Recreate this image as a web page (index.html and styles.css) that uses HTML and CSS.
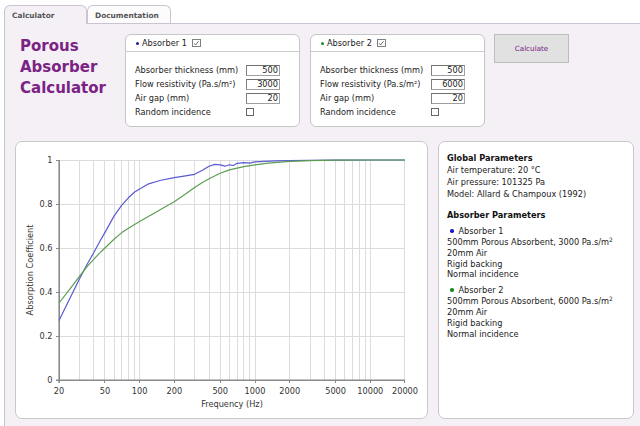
FILE: index.html
```html
<!DOCTYPE html>
<html lang="en">
<head>
<meta charset="utf-8">
<title>Porous Absorber Calculator</title>
<link rel="stylesheet" href="styles.css">
</head>
<body>
<nav class="tabs">
  <div class="tab active">Calculator</div>
  <div class="tab doc">Documentation</div>
</nav>
<main class="content">
  <section class="top">
    <h1 class="title">Porous<br>Absorber<br>Calculator</h1>
    <div class="absorber">
      <div class="abs-head"><span class="dot dot-blue"></span><span class="abs-name">Absorber 1</span><span class="cb cb-head"><svg viewBox="0 0 8 8"><path d="M1.4 4.1 L3.2 6.1 L6.8 1.5"/></svg></span></div>
      <div class="abs-body">
        <span class="lbl">Absorber thickness (mm)</span><span class="field">500</span>
        <span class="lbl">Flow resistivity (Pa.s/m²)</span><span class="field">3000</span>
        <span class="lbl">Air gap (mm)</span><span class="field">20</span>
        <span class="lbl">Random incidence</span><span class="cb"></span>
      </div>
    </div>
    <div class="absorber">
      <div class="abs-head"><span class="dot dot-green"></span><span class="abs-name">Absorber 2</span><span class="cb cb-head"><svg viewBox="0 0 8 8"><path d="M1.4 4.1 L3.2 6.1 L6.8 1.5"/></svg></span></div>
      <div class="abs-body">
        <span class="lbl">Absorber thickness (mm)</span><span class="field">500</span>
        <span class="lbl">Flow resistivity (Pa.s/m²)</span><span class="field">6000</span>
        <span class="lbl">Air gap (mm)</span><span class="field">20</span>
        <span class="lbl">Random incidence</span><span class="cb"></span>
      </div>
    </div>
    <button class="calc" type="button">Calculate</button>
  </section>
  <section class="bottom">
    <div class="panel chart">
      <svg class="plot" width="411" height="276" viewBox="16 142 411 276">
        <g transform="translate(14 141)">
          <path class="grid" d="M45 19.5H391 M45 63.5H391 M45 107.5H391 M45 151.5H391 M45 195.5H391
            M65.5 19V239 M79.5 19V239 M90.5 19V239 M100.5 19V239 M107.5 19V239 M114.5 19V239 M120.5 19V239 M125.5 19V239
            M160.5 19V239 M180.5 19V239 M195.5 19V239 M206.5 19V239 M215.5 19V239 M223.5 19V239 M229.5 19V239 M235.5 19V239 M241.5 19V239
            M275.5 19V239 M296.5 19V239 M310.5 19V239 M321.5 19V239 M330.5 19V239 M338.5 19V239 M345.5 19V239 M351.5 19V239 M356.5 19V239 M390.5 19V239"/>
          <path class="ticks" d="M42 19.5H45 M42 63.5H45 M42 107.5H45 M42 151.5H45 M42 195.5H45
            M90.5 239V242 M125.5 239V242 M160.5 239V242 M206.5 239V242 M241.5 239V242 M275.5 239V242 M321.5 239V242 M356.5 239V242 M390.5 239V242"/>
          <path class="axis" d="M45.2 19V242 M42 239.2H391"/>
          <polyline class="line-blue" points="45,179.6 56.2,156.7 65.3,138.2 73,123.5 79.7,111.8 85.6,100.8 90.9,91.6 100,75.1 107.8,64.1 114.4,56.8 120.3,51.3 125.6,48 134.7,42.8 145.9,39.5 160.3,36.6 171.5,34.8 180.6,33.3 188.4,29.3 195,25.2 201,23.4 206.2,23.8 211,25.2 215.4,23.8 219.4,24.5 223.1,22.3 229.8,21.6 235.7,22.1 241,20.8 250.1,20.3 261.3,19.9 275.7,19.7 296,19.4 321.6,19.2 356.3,19 391,19"/>
          <polyline class="line-green" points="45,162 56.2,147.7 65.3,135.6 73,125.7 79.7,118.4 85.6,112.1 90.9,107 100,98.2 107.8,91.6 114.4,87.2 125.6,80.6 138.8,72.9 152.2,65.2 160.3,60.8 171.5,53.1 180.6,46.5 188.4,41.4 195,37.7 206.2,32.2 215.4,28.9 229.8,25.6 241,23.8 254.3,22.1 275.7,20.3 296,19.7 321.6,19.2 356.3,19 391,19"/>
          <g class="ylab">
            <text x="38.5" y="22">1</text>
            <text x="38.5" y="66">0.8</text>
            <text x="38.5" y="110">0.6</text>
            <text x="38.5" y="154">0.4</text>
            <text x="38.5" y="198">0.2</text>
            <text x="38.5" y="242">0</text>
          </g>
          <g class="xlab">
            <text x="45" y="253">20</text>
            <text x="91" y="253">50</text>
            <text x="125.6" y="253">100</text>
            <text x="160.3" y="253">200</text>
            <text x="206.2" y="253">500</text>
            <text x="241" y="253">1000</text>
            <text x="275.7" y="253">2000</text>
            <text x="321.6" y="253">5000</text>
            <text x="356.3" y="253">10000</text>
            <text x="391" y="253">20000</text>
          </g>
          <text class="axtitle" x="218" y="265.5">Frequency (Hz)</text>
          <text class="axtitle" x="19" y="129" transform="rotate(-90 19 129)">Absorption Coefficient</text>
        </g>
      </svg>
    </div>
    <div class="panel params">
      <h2 class="ph">Global Parameters</h2>
      <p class="glines">Air temperature: 20 °C<br>Air pressure: 101325 Pa<br>Model: Allard &amp; Champoux (1992)</p>
      <h2 class="ph ph2">Absorber Parameters</h2>
      <div class="ab">
        <div class="ab-name"><span class="pdot pdot-blue"></span>Absorber 1</div>
        <p class="alines">500mm Porous Absorbent, 3000 Pa.s/m<sup>2</sup><br>20mm Air<br>Rigid backing<br>Normal incidence</p>
      </div>
      <div class="ab">
        <div class="ab-name"><span class="pdot pdot-green"></span>Absorber 2</div>
        <p class="alines">500mm Porous Absorbent, 6000 Pa.s/m<sup>2</sup><br>20mm Air<br>Rigid backing<br>Normal incidence</p>
      </div>
    </div>
  </section>
</main>
</body>
</html>
```
FILE: styles.css
```css
html, body {
  margin: 0;
  padding: 0;
}
body {
  width: 640px;
  height: 426px;
  overflow: hidden;
  background: #ffffff;
  font-family: "DejaVu Sans", Verdana, sans-serif;
  font-size: 8.2px;
  color: #222;
}

/* Tabs */
.tabs {
  display: flex;
  align-items: flex-end;
  height: 23px;
  padding-left: 4px;
  box-sizing: border-box;
}
.tab {
  box-sizing: border-box;
  height: 18px;
  width: 84px;
  border: 1px solid #cbc3cf;
  border-bottom: none;
  border-radius: 6px 6px 0 0;
  padding: 5px 0 0 7px;
  font-size: 7.4px;
  line-height: 9px;
  font-weight: bold;
  color: #555;
  background: #fdfcfd;
}
.tab.active {
  width: 83px;
  height: 19px;
  margin-bottom: -1px;
  background: #f4f0f6;
  position: relative;
  z-index: 1;
}

/* Content */
.content {
  display: block;
  margin-left: 4px;
  height: 402px;
  border-left: 1px solid #cbc3cf;
  border-top: 1px solid #cbc3cf;
  background: #f4f0f6;
}
.top {
  display: flex;
  align-items: flex-start;
  padding-top: 10px;
}
.title {
  margin: 2px 0 0 15px;
  width: 105px;
  font-size: 15px;
  line-height: 21px;
  font-weight: bold;
  color: #7b2385;
}
.absorber {
  box-sizing: border-box;
  width: 175px;
  height: 93px;
  border: 1px solid #c6c6c6;
  border-radius: 6px;
  background: #fff;
}
.absorber + .absorber {
  margin-left: 10px;
}
.abs-head {
  height: 16px;
  display: flex;
  align-items: center;
  padding-left: 10px;
  border-bottom: 1px solid #cccccc;
}
.dot {
  flex: none;
  width: 3px;
  height: 3px;
  border-radius: 50%;
  margin-right: 3px;
}
.dot-blue { background: #1c1c9c; }
.dot-green { background: #1c8c2c; }
.abs-name {
  line-height: 10px;
}
.cb {
  display: inline-block;
  box-sizing: border-box;
  width: 8px;
  height: 8px;
  border: 1px solid #666;
  background: #fff;
}
.cb-head {
  flex: none;
  width: 8.5px;
  height: 8.5px;
  margin-left: 5.5px;
  border-color: #808080;
}
.cb-head svg {
  display: block;
  width: 6.5px;
  height: 6.5px;
}
.cb-head path {
  fill: none;
  stroke: #333;
  stroke-width: 0.9;
}
.abs-body {
  display: grid;
  grid-template-columns: 111px 34px;
  grid-auto-rows: 14px;
  align-items: center;
  padding: 11px 0 0 9px;
}
.lbl {
  line-height: 10px;
  white-space: nowrap;
}
.field {
  box-sizing: border-box;
  height: 11px;
  border: 1px solid #a0a0a0;
  border-top-color: #707070;
  border-left-color: #808080;
  text-align: right;
  padding-right: 1px;
  line-height: 9px;
  background: #fff;
  color: #222;
}
.calc {
  margin-left: 9px;
  box-sizing: border-box;
  width: 75px;
  height: 29px;
  padding: 0;
  background: #e1e1e1;
  border: 1px solid #bdbdbd;
  color: #7b2385;
  font-family: "DejaVu Sans", Verdana, sans-serif;
  font-size: 7.2px;
}

/* Bottom panels */
.bottom {
  display: flex;
  gap: 10px;
  margin-top: 14px;
  padding-left: 10px;
}
.panel {
  box-sizing: border-box;
  height: 278px;
  border: 1px solid #c8c8c8;
  border-radius: 7px;
  background: #fff;
}
.chart {
  width: 413px;
}
.plot {
  display: block;
}
.grid {
  fill: none;
  stroke: #dcdcdc;
  stroke-width: 1;
}
.ticks {
  fill: none;
  stroke: #888;
  stroke-width: 1;
}
.axis {
  fill: none;
  stroke: #8a8a8a;
  stroke-width: 1.6;
}
.line-blue, .line-green {
  fill: none;
  stroke-width: 1.2;
  stroke-linejoin: round;
}
.line-blue { stroke: #5a5ad2; }
.line-green { stroke: #5c9e52; }
.ylab text {
  text-anchor: end;
  font-size: 8.2px;
  fill: #333;
}
.xlab text {
  text-anchor: middle;
  font-size: 8.2px;
  fill: #333;
}
.axtitle {
  text-anchor: middle;
  font-size: 8.2px;
  fill: #333;
}

.params {
  width: 196px;
  padding: 10px 8px;
}
.ph {
  margin: 0;
  font-size: 8.2px;
  line-height: 12px;
  font-weight: bold;
  color: #111;
}
.ph2 {
  margin-top: 9px;
}
.glines {
  margin: 0;
  line-height: 12px;
}
.ab-name {
  display: flex;
  align-items: center;
  line-height: 12px;
  margin-top: 4px;
}
.pdot {
  flex: none;
  width: 3.5px;
  height: 3.5px;
  border-radius: 50%;
  margin: 0 5px 0 3px;
}
.pdot-blue { background: #1a1acc; }
.pdot-green { background: #1a8a1a; }
.alines {
  margin: 0;
  line-height: 10.8px;
}
.alines sup {
  font-size: 6px;
  line-height: 0;
  vertical-align: 3px;
}
```
